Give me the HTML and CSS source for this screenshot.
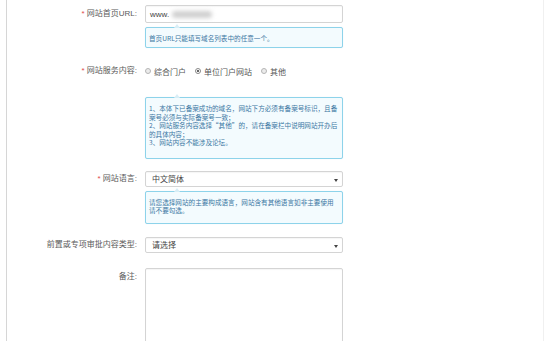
FILE: index.html
```html
<!DOCTYPE html>
<html lang="zh-CN">

<head>
    <meta charset="UTF-8">
    <title>网站信息</title>
    <link rel="stylesheet" href="styles.css">
</head>

<body>
    <div class="panel">
        <!-- 网站首页 -->
        <div class="row">
            <label class="lbl"><span class="req">*</span> 网站首页URL:</label>
            <div class="field">
                <div class="input">www.<span class="blur"></span></div>
            </div>
        </div>
        <div class="row row-tip">
            <div></div>
            <div class="tip tip-url">首页URL只能填写域名列表中的任意一个。</div>
        </div>

        <!-- 服务内容 -->
        <div class="row row-radio">
            <label class="lbl"><span class="req">*</span> 网站服务内容:</label>
            <div class="field radios">
                <span class="radio"><i class="dot"></i>综合门户</span>
                <span class="radio"><i class="dot on"></i>单位门户网站</span>
                <span class="radio"><i class="dot"></i>其他</span>
            </div>
        </div>
        <div class="row row-tip2">
            <div></div>
            <div class="tip tip-service">
                1、本体下已备案成功的域名，网站下方必须有备案号标识，且备案号必须与实际备案号一致；<br>
                2、网站服务内容选择“其他”的，请在备案栏中说明网站开办后的具体内容；<br>
                3、网站内容不能涉及论坛。
            </div>
        </div>

        <!-- 语言 -->
        <div class="row row-lang">
            <label class="lbl"><span class="req">*</span> 网站语言:</label>
            <div class="field">
                <div class="select">中文简体<i class="caret"></i></div>
            </div>
        </div>
        <div class="row row-tip">
            <div></div>
            <div class="tip tip-lang">请您选择网站的主要构成语言，网站含有其他语言如非主要使用请不要勾选。</div>
        </div>

        <!-- 前置审批 -->
        <div class="row row-pre">
            <label class="lbl">前置或专项审批内容类型:</label>
            <div class="field">
                <div class="select">请选择<i class="caret"></i></div>
            </div>
        </div>

        <!-- 备注 -->
        <div class="row row-note">
            <label class="lbl">备注:</label>
            <div class="field">
                <div class="textarea"></div>
            </div>
        </div>
    </div>
</body>

</html>
```

FILE: styles.css
```css
body {
    margin: 0;
    background: #fff;
    font-family: "Liberation Sans", "Noto Sans CJK SC", sans-serif;
    font-size: 8px;
    color: #555;
    overflow: hidden;
}

.panel {
    margin-left: 6px;
    width: 538px;
    height: 341px;
    border-left: 1px solid #d6d6d6;
    border-right: 1px solid #f0f0f0;
    padding-top: 5px;
    box-sizing: border-box;
    overflow: hidden;
}

.row {
    display: grid;
    grid-template-columns: 130px 198px;
    column-gap: 8px;
}

.lbl {
    text-align: right;
    line-height: 18px;
    color: #5a5a5a;
}

.req {
    color: #e04b4b;
}

.input,
.select {
    position: relative;
    height: 18px;
    line-height: 18px;
    border: 1px solid #d4d4d4;
    border-radius: 2px;
    padding: 0 6px;
    box-sizing: border-box;
    color: #444;
    box-shadow: inset 0 1px 1px rgba(0, 0, 0, 0.04);
}

.input {
    padding-left: 4px;
}

.blur {
    display: inline-block;
    width: 40px;
    height: 7px;
    margin-left: 3px;
    vertical-align: -1px;
    background: #cfcfcf;
    border-radius: 4px;
    filter: blur(2px);
}

.select {
    height: 16px;
    line-height: 16px;
}

.caret {
    position: absolute;
    right: 4px;
    top: 7px;
    border-left: 2px solid transparent;
    border-right: 2px solid transparent;
    border-top: 3px solid #444;
}

/* 提示框 */
.row-tip {
    margin-top: 4px;
}

.tip {
    position: relative;
    background: #f3fbfe;
    border: 1px solid #8dd3ea;
    border-radius: 2px;
    padding: 6px 3px;
    font-family: "Noto Sans CJK SC", sans-serif;
    font-size: 6.6px;
    line-height: 8.5px;
    color: #3b77a3;
    box-shadow: 0 0 1px rgba(0, 130, 180, 0.15);
}

.tip::before {
    content: "";
    position: absolute;
    left: 28px;
    top: -4px;
    border-left: 3px solid transparent;
    border-right: 3px solid transparent;
    border-bottom: 4px solid #d8eef6;
}

.tip-url {
    height: 21px;
    box-sizing: border-box;
}

.tip-service {
    padding-bottom: 11px;
}

.tip-lang {
    padding-bottom: 8px;
}

/* 单选 */
.row-radio {
    margin-top: 14px;
}

.radios {
    display: flex;
    align-items: center;
    gap: 9px;
    height: 18px;
    color: #555;
}

.radio {
    display: flex;
    align-items: center;
    gap: 3px;
}

.dot {
    display: inline-block;
    width: 6px;
    height: 6px;
    border: 1px solid #b5b5b5;
    border-radius: 50%;
    background: #ececec;
    box-sizing: border-box;
    position: relative;
}

.dot.on {
    background: #fff;
    border-color: #888;
}

.dot.on::after {
    content: "";
    position: absolute;
    left: 1px;
    top: 1px;
    width: 2px;
    height: 2px;
    border-radius: 50%;
    background: #333;
}

.row-tip2 {
    margin-top: 17px;
}

.row-lang {
    margin-top: 12px;
}

.row-lang .lbl,
.row-pre .lbl {
    line-height: 16px;
}

.row-pre {
    margin-top: 13px;
}

.row-note {
    margin-top: 15px;
}

.textarea {
    height: 90px;
    border: 1px solid #d4d4d4;
    border-radius: 2px;
    box-shadow: inset 0 1px 1px rgba(0, 0, 0, 0.04);
}
```
